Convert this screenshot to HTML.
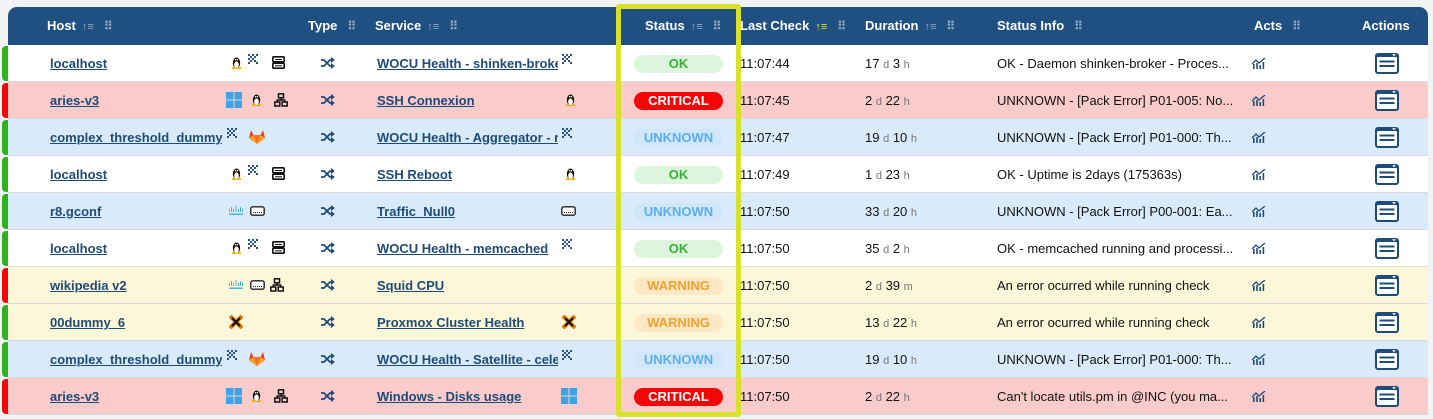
<!DOCTYPE html>
<html><head><meta charset="utf-8"><style>
*{margin:0;padding:0;box-sizing:border-box}
body{width:1433px;height:419px;overflow:hidden;background:#f2f3f5;font-family:"Liberation Sans",sans-serif;font-size:13px;color:#111;position:relative}
.hd{position:absolute;left:8px;top:7px;width:1420px;height:38px;background:#1f5081;border-radius:9px 9px 0 0}
.h{position:absolute;top:18px;color:#fff;font-weight:bold;font-size:13px}
.h i{font-style:normal;color:#8fa7c0;font-size:11px;margin-left:6px}
.h b{color:#8fa7c0;font-size:12px;margin-left:10px;letter-spacing:-1px}
.row{position:absolute;left:8px;width:1420px;height:37px;border-bottom:1px solid #d9dadc}
.bar{position:absolute;left:2px;width:6px;height:35px;border-radius:4px 0 0 4px}
.c{position:absolute;top:0;height:37px;line-height:38px;white-space:nowrap;overflow:hidden}
a{color:#1e4b78;font-weight:bold;text-decoration:underline}
.pill{position:absolute;left:626px;top:10px;width:89px;height:18px;border-radius:9px;text-align:center;line-height:18px;font-weight:bold;font-size:13px}
.ok{background:#dcf5dc;color:#35b335}
.cr{background:#f40606;color:#fff}
.un{background:#d0e6fa;color:#5aaef0}
.wa{background:#fde8c6;color:#f3a02c}
.u{color:#777;font-size:11px}
.ic{position:absolute;top:11px}
.yb{position:absolute;left:616px;top:4px;width:125px;height:413px;border:5px solid #d9e22a;border-radius:3px}
</style></head><body>
<svg width="0" height="0" style="position:absolute"><defs>
<symbol id="lin" viewBox="0 0 12 14"><ellipse cx="6" cy="7" rx="4" ry="6" fill="#111"/><ellipse cx="6" cy="9" rx="2.6" ry="3.6" fill="#fff"/><circle cx="5" cy="3.5" r=".8" fill="#fff"/><circle cx="7" cy="3.5" r=".8" fill="#fff"/><path d="M5 5h2l-1 1z" fill="#f0b400"/><ellipse cx="3" cy="12.5" rx="2.2" ry="1.3" fill="#f0b400"/><ellipse cx="9" cy="12.5" rx="2.2" ry="1.3" fill="#f0b400"/></symbol>
<symbol id="dot" viewBox="0 0 10 10" fill="#1a4270"><circle cx="1" cy="1" r="1.1"/><circle cx="5" cy="1" r="1.1"/><circle cx="9" cy="1" r="1.1"/><circle cx="3" cy="3" r="1.1"/><circle cx="7" cy="3" r="1.1"/><circle cx="1" cy="5" r="1.1"/><circle cx="5" cy="5" r="1.1"/><circle cx="3" cy="7" r="1.1"/><circle cx="7" cy="7" r="1.1"/><circle cx="1" cy="9" r="1.1"/><circle cx="9" cy="9" r="1.1"/></symbol>
<symbol id="srv" viewBox="0 0 13 13"><rect x=".8" y=".8" width="11.4" height="5" rx="1" fill="none" stroke="#111" stroke-width="1.6"/><rect x=".8" y="7.2" width="11.4" height="5" rx="1" fill="none" stroke="#111" stroke-width="1.6"/><rect x="3" y="3" width="7" height="1" fill="#111"/><rect x="3" y="9.3" width="7" height="1" fill="#111"/></symbol>
<symbol id="win" viewBox="0 0 16 16" fill="#3ba6e6"><rect x="0" y="0" width="7.5" height="7.5"/><rect x="8.5" y="0" width="7.5" height="7.5"/><rect x="0" y="8.5" width="7.5" height="7.5"/><rect x="8.5" y="8.5" width="7.5" height="7.5"/></symbol>
<symbol id="net" viewBox="0 0 14 14" fill="none" stroke="#111" stroke-width="1.5"><rect x="4.5" y=".8" width="5" height="4"/><rect x=".8" y="9" width="5" height="4"/><rect x="8.2" y="9" width="5" height="4"/><path d="M7 5v2M3.3 9V7h7.4v2"/></symbol>
<symbol id="git" viewBox="0 0 16 14"><path d="M8 14L0 8 2 0l2.5 5h7L14 0l2 8z" fill="#e2432a"/><path d="M8 14L4.5 5h7z" fill="#fc6d26"/><path d="M0 8l8 6-3.5-9z" fill="#fca326"/><path d="M16 8l-8 6 3.5-9z" fill="#fca326"/></symbol>
<symbol id="cis" viewBox="0 0 16 10" fill="#48b6e0"><rect x="1" y="3" width="1" height="3"/><rect x="3" y="1" width="1" height="5"/><rect x="5" y="3" width="1" height="3"/><rect x="7.5" y="0" width="1" height="6"/><rect x="10" y="3" width="1" height="3"/><rect x="12" y="1" width="1" height="5"/><rect x="14" y="3" width="1" height="3"/><rect x="1" y="7.5" width="14" height="1.5"/></symbol>
<symbol id="sw" viewBox="0 0 15 10"><rect x=".8" y=".8" width="13.4" height="8.4" rx="2" fill="#fff" stroke="#222" stroke-width="1.4"/><path d="M3 6.5h9" stroke="#222" stroke-width="1" stroke-dasharray="1 1"/></symbol>
<symbol id="pmx" viewBox="0 0 14 14"><path d="M1 1l12 12M13 1L1 13" stroke="#e57000" stroke-width="4"/><path d="M3 3l8 8M11 3L3 11" stroke="#111" stroke-width="2"/></symbol>
<symbol id="shf" viewBox="0 0 14 12" fill="none" stroke="#1e4b78" stroke-width="1.8"><path d="M0 3h3l6 6h3M0 9h3l6-6h3"/><path d="M10 0.5l3 2.5-3 2.5M10 6.5l3 2.5-3 2.5" fill="#1e4b78" stroke-width="1"/></symbol>
<symbol id="cht" viewBox="0 0 14 11" fill="#1e4b78"><rect x="1" y="6" width="1.6" height="5"/><rect x="4.2" y="5" width="1.6" height="6"/><rect x="7.4" y="7" width="1.6" height="4"/><rect x="10.6" y="4" width="1.6" height="7"/><path d="M0 6l4-4 3 3 6-5" fill="none" stroke="#1e4b78" stroke-width="1.3"/></symbol>
<symbol id="act" viewBox="0 0 24 21"><rect x="0" y="0" width="24" height="21" rx="3" fill="#1e4b78"/><rect x="2" y="4" width="20" height="15" rx="1" fill="#fff"/><path d="M17 1.3h4l-2 2z" fill="#fff"/><rect x="4.5" y="7.5" width="15" height="2" fill="#1e4b78"/><rect x="4.5" y="12" width="15" height="2" fill="#1e4b78"/></symbol>
</defs></svg>

<div class="hd"></div>
<div class="h" style="left:47px">Host<i>↑≡</i><b>⠿</b></div>
<div class="h" style="left:308px">Type<b>⠿</b></div>
<div class="h" style="left:375px">Service<i>↑≡</i><b>⠿</b></div>
<div class="h" style="left:645px">Status<i>↑≡</i><b>⠿</b></div>
<div class="h" style="left:740px">Last Check<i style="color:#e0e030">↑≡</i><b>⠿</b></div>
<div class="h" style="left:865px">Duration<i>↑≡</i><b>⠿</b></div>
<div class="h" style="left:997px">Status Info<b>⠿</b></div>
<div class="h" style="left:1254px">Acts<b>⠿</b></div>
<div class="h" style="left:1362px">Actions</div>

<div class="row" style="top:45px;background:#fff"><div class="c" style="left:42px;width:172px"><a>localhost</a></div><svg class="ic" style="left:223px" width="11" height="14"><use href="#lin"/></svg><svg class="ic" style="left:240px;top:9px" width="10" height="10"><use href="#dot"/></svg><svg class="ic" style="left:264px" width="13" height="13"><use href="#srv"/></svg><svg class="ic" style="left:313px;top:12px" width="14" height="12"><use href="#shf"/></svg><div class="c" style="left:369px;width:181px"><a>WOCU Health - shinken-broker</a></div><svg class="ic" style="left:554px;top:9px" width="10" height="10"><use href="#dot"/></svg><div class="pill ok">OK</div><div class="c" style="left:732px">11:07:44</div><div class="c" style="left:857px">17 <span class="u">d</span> 3 <span class="u">h</span></div><div class="c" style="left:989px">OK - Daemon shinken-broker - Proces...</div><svg class="ic" style="left:1244px;top:13px" width="14" height="11"><use href="#cht"/></svg><svg class="ic" style="left:1367px;top:8px" width="24" height="21"><use href="#act"/></svg></div>

<div class="row" style="top:82px;background:#f9cbcb"><div class="c" style="left:42px;width:172px"><a>aries-v3</a></div><svg class="ic" style="left:218px;top:10px" width="16" height="16"><use href="#win"/></svg><svg class="ic" style="left:243px" width="11" height="14"><use href="#lin"/></svg><svg class="ic" style="left:266px" width="14" height="14"><use href="#net"/></svg><svg class="ic" style="left:313px;top:12px" width="14" height="12"><use href="#shf"/></svg><div class="c" style="left:369px;width:181px"><a>SSH Connexion</a></div><svg class="ic" style="left:557px" width="11" height="14"><use href="#lin"/></svg><div class="pill cr">CRITICAL</div><div class="c" style="left:732px">11:07:45</div><div class="c" style="left:857px">2 <span class="u">d</span> 22 <span class="u">h</span></div><div class="c" style="left:989px">UNKNOWN - [Pack Error] P01-005: No...</div><svg class="ic" style="left:1244px;top:13px" width="14" height="11"><use href="#cht"/></svg><svg class="ic" style="left:1367px;top:8px" width="24" height="21"><use href="#act"/></svg></div>

<div class="row" style="top:119px;background:#d9ebfa"><div class="c" style="left:42px;width:172px"><a>complex_threshold_dummy</a></div><svg class="ic" style="left:219px;top:9px" width="10" height="10"><use href="#dot"/></svg><svg class="ic" style="left:241px" width="16" height="14"><use href="#git"/></svg><svg class="ic" style="left:313px;top:12px" width="14" height="12"><use href="#shf"/></svg><div class="c" style="left:369px;width:181px"><a>WOCU Health - Aggregator - r</a></div><svg class="ic" style="left:554px;top:9px" width="10" height="10"><use href="#dot"/></svg><div class="pill un">UNKNOWN</div><div class="c" style="left:732px">11:07:47</div><div class="c" style="left:857px">19 <span class="u">d</span> 10 <span class="u">h</span></div><div class="c" style="left:989px">UNKNOWN - [Pack Error] P01-000: Th...</div><svg class="ic" style="left:1244px;top:13px" width="14" height="11"><use href="#cht"/></svg><svg class="ic" style="left:1367px;top:8px" width="24" height="21"><use href="#act"/></svg></div>

<div class="row" style="top:156px;background:#fff"><div class="c" style="left:42px;width:172px"><a>localhost</a></div><svg class="ic" style="left:223px" width="11" height="14"><use href="#lin"/></svg><svg class="ic" style="left:240px;top:9px" width="10" height="10"><use href="#dot"/></svg><svg class="ic" style="left:264px" width="13" height="13"><use href="#srv"/></svg><svg class="ic" style="left:313px;top:12px" width="14" height="12"><use href="#shf"/></svg><div class="c" style="left:369px;width:181px"><a>SSH Reboot</a></div><svg class="ic" style="left:557px" width="11" height="14"><use href="#lin"/></svg><div class="pill ok">OK</div><div class="c" style="left:732px">11:07:49</div><div class="c" style="left:857px">1 <span class="u">d</span> 23 <span class="u">h</span></div><div class="c" style="left:989px">OK - Uptime is 2days (175363s)</div><svg class="ic" style="left:1244px;top:13px" width="14" height="11"><use href="#cht"/></svg><svg class="ic" style="left:1367px;top:8px" width="24" height="21"><use href="#act"/></svg></div>

<div class="row" style="top:193px;background:#d9ebfa"><div class="c" style="left:42px;width:172px"><a>r8.gconf</a></div><svg class="ic" style="left:220px;top:13px" width="16" height="10"><use href="#cis"/></svg><svg class="ic" style="left:242px;top:13px" width="15" height="10"><use href="#sw"/></svg><svg class="ic" style="left:313px;top:12px" width="14" height="12"><use href="#shf"/></svg><div class="c" style="left:369px;width:181px"><a>Traffic_Null0</a></div><svg class="ic" style="left:553px;top:13px" width="15" height="10"><use href="#sw"/></svg><div class="pill un">UNKNOWN</div><div class="c" style="left:732px">11:07:50</div><div class="c" style="left:857px">33 <span class="u">d</span> 20 <span class="u">h</span></div><div class="c" style="left:989px">UNKNOWN - [Pack Error] P00-001: Ea...</div><svg class="ic" style="left:1244px;top:13px" width="14" height="11"><use href="#cht"/></svg><svg class="ic" style="left:1367px;top:8px" width="24" height="21"><use href="#act"/></svg></div>

<div class="row" style="top:230px;background:#fff"><div class="c" style="left:42px;width:172px"><a>localhost</a></div><svg class="ic" style="left:223px" width="11" height="14"><use href="#lin"/></svg><svg class="ic" style="left:240px;top:9px" width="10" height="10"><use href="#dot"/></svg><svg class="ic" style="left:264px" width="13" height="13"><use href="#srv"/></svg><svg class="ic" style="left:313px;top:12px" width="14" height="12"><use href="#shf"/></svg><div class="c" style="left:369px;width:181px"><a>WOCU Health - memcached</a></div><svg class="ic" style="left:554px;top:9px" width="10" height="10"><use href="#dot"/></svg><div class="pill ok">OK</div><div class="c" style="left:732px">11:07:50</div><div class="c" style="left:857px">35 <span class="u">d</span> 2 <span class="u">h</span></div><div class="c" style="left:989px">OK - memcached running and processi...</div><svg class="ic" style="left:1244px;top:13px" width="14" height="11"><use href="#cht"/></svg><svg class="ic" style="left:1367px;top:8px" width="24" height="21"><use href="#act"/></svg></div>

<div class="row" style="top:267px;background:#fdf7d9"><div class="c" style="left:42px;width:172px"><a>wikipedia v2</a></div><svg class="ic" style="left:220px;top:13px" width="16" height="10"><use href="#cis"/></svg><svg class="ic" style="left:242px;top:13px" width="15" height="10"><use href="#sw"/></svg><svg class="ic" style="left:262px" width="14" height="14"><use href="#net"/></svg><svg class="ic" style="left:313px;top:12px" width="14" height="12"><use href="#shf"/></svg><div class="c" style="left:369px;width:181px"><a>Squid CPU</a></div><div class="pill wa">WARNING</div><div class="c" style="left:732px">11:07:50</div><div class="c" style="left:857px">2 <span class="u">d</span> 39 <span class="u">m</span></div><div class="c" style="left:989px">An error ocurred while running check</div><svg class="ic" style="left:1244px;top:13px" width="14" height="11"><use href="#cht"/></svg><svg class="ic" style="left:1367px;top:8px" width="24" height="21"><use href="#act"/></svg></div>

<div class="row" style="top:304px;background:#fdf7d9"><div class="c" style="left:42px;width:172px"><a>00dummy_6</a></div><svg class="ic" style="left:221px" width="14" height="14"><use href="#pmx"/></svg><svg class="ic" style="left:313px;top:12px" width="14" height="12"><use href="#shf"/></svg><div class="c" style="left:369px;width:181px"><a>Proxmox Cluster Health</a></div><svg class="ic" style="left:554px" width="14" height="14"><use href="#pmx"/></svg><div class="pill wa">WARNING</div><div class="c" style="left:732px">11:07:50</div><div class="c" style="left:857px">13 <span class="u">d</span> 22 <span class="u">h</span></div><div class="c" style="left:989px">An error ocurred while running check</div><svg class="ic" style="left:1244px;top:13px" width="14" height="11"><use href="#cht"/></svg><svg class="ic" style="left:1367px;top:8px" width="24" height="21"><use href="#act"/></svg></div>

<div class="row" style="top:341px;background:#d9ebfa"><div class="c" style="left:42px;width:172px"><a>complex_threshold_dummy</a></div><svg class="ic" style="left:219px;top:9px" width="10" height="10"><use href="#dot"/></svg><svg class="ic" style="left:241px" width="16" height="14"><use href="#git"/></svg><svg class="ic" style="left:313px;top:12px" width="14" height="12"><use href="#shf"/></svg><div class="c" style="left:369px;width:181px"><a>WOCU Health - Satellite - celeb</a></div><svg class="ic" style="left:554px;top:9px" width="10" height="10"><use href="#dot"/></svg><div class="pill un">UNKNOWN</div><div class="c" style="left:732px">11:07:50</div><div class="c" style="left:857px">19 <span class="u">d</span> 10 <span class="u">h</span></div><div class="c" style="left:989px">UNKNOWN - [Pack Error] P01-000: Th...</div><svg class="ic" style="left:1244px;top:13px" width="14" height="11"><use href="#cht"/></svg><svg class="ic" style="left:1367px;top:8px" width="24" height="21"><use href="#act"/></svg></div>

<div class="row" style="top:378px;background:#f9cbcb"><div class="c" style="left:42px;width:172px"><a>aries-v3</a></div><svg class="ic" style="left:218px;top:10px" width="16" height="16"><use href="#win"/></svg><svg class="ic" style="left:243px" width="11" height="14"><use href="#lin"/></svg><svg class="ic" style="left:266px" width="14" height="14"><use href="#net"/></svg><svg class="ic" style="left:313px;top:12px" width="14" height="12"><use href="#shf"/></svg><div class="c" style="left:369px;width:181px"><a>Windows - Disks usage</a></div><svg class="ic" style="left:553px;top:10px" width="16" height="16"><use href="#win"/></svg><div class="pill cr">CRITICAL</div><div class="c" style="left:732px">11:07:50</div><div class="c" style="left:857px">2 <span class="u">d</span> 22 <span class="u">h</span></div><div class="c" style="left:989px">Can't locate utils.pm in @INC (you ma...</div><svg class="ic" style="left:1244px;top:13px" width="14" height="11"><use href="#cht"/></svg><svg class="ic" style="left:1367px;top:8px" width="24" height="21"><use href="#act"/></svg></div>

<div class="bar" style="top:46px;background:#2fb21e"></div>
<div class="bar" style="top:83px;background:#f40606"></div>
<div class="bar" style="top:120px;background:#2fb21e"></div>
<div class="bar" style="top:157px;background:#2fb21e"></div>
<div class="bar" style="top:194px;background:#2fb21e"></div>
<div class="bar" style="top:231px;background:#2fb21e"></div>
<div class="bar" style="top:268px;background:#f40606"></div>
<div class="bar" style="top:305px;background:#2fb21e"></div>
<div class="bar" style="top:342px;background:#2fb21e"></div>
<div class="bar" style="top:379px;background:#f40606"></div>

<div class="yb"></div>
</body></html>
